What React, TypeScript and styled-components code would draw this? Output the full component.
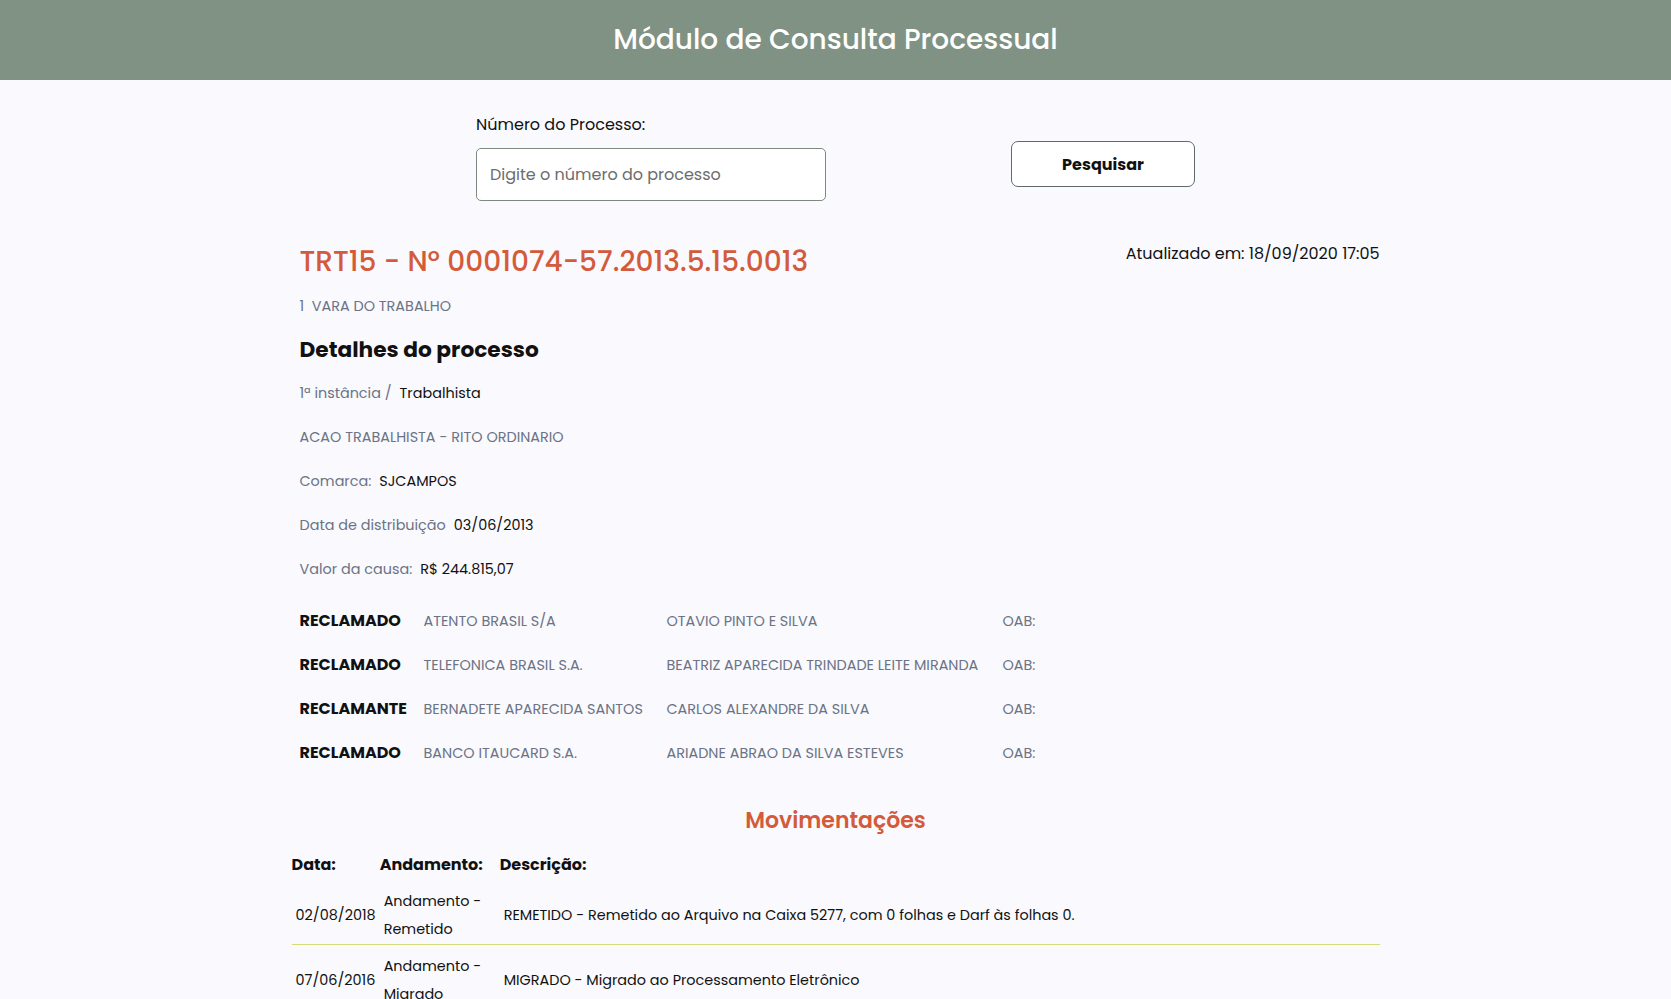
import styled, { createGlobalStyle } from 'styled-components'

const GlobalStyle = createGlobalStyle`
  body {
    margin: 0;
    background: #f9f9fe;
    font-family: "Poppins", "Open Sans", sans-serif;
    color: #111;
  }
`

const Header = styled.header`
  height: 80px;
  background: #7f9283;
  display: flex;
  align-items: center;
  justify-content: center;
`

const HeaderTitle = styled.h1`
  margin: 0;
  color: #fff;
  font-size: 28px;
  font-weight: 500;
`

const SearchForm = styled.form`
  width: 719px;
  margin: 35px auto 0;
  display: flex;
  justify-content: space-between;
  align-items: flex-start;
`

const Field = styled.div`
  display: flex;
  flex-direction: column;
`

const Label = styled.label`
  font-size: 16px;
  line-height: 20px;
  margin-bottom: 13px;
`

const Input = styled.input`
  box-sizing: border-box;
  width: 350px;
  height: 53px;
  padding: 0 13px;
  border: 1px solid #7d8a7f;
  border-radius: 5px;
  background: #fff;
  font-family: inherit;
  font-size: 16px;
  &::placeholder {
    color: #6d6d6d;
  }
`

const Button = styled.button`
  box-sizing: border-box;
  width: 184px;
  height: 46px;
  margin-top: 26px;
  border: 1px solid #5f6b6b;
  border-radius: 7px;
  background: #fff;
  font-family: inherit;
  font-size: 16px;
  font-weight: 700;
  color: #111;
  cursor: pointer;
`

const Main = styled.main`
  width: 1088px;
  margin: 41px auto 0;
`

const Details = styled.section`
  padding: 0 0 0 8px;
`

const TitleRow = styled.div`
  display: flex;
  justify-content: space-between;
  align-items: flex-start;
`

const ProcessTitle = styled.h2`
  margin: 0;
  font-size: 28px;
  line-height: 40px;
  font-weight: 500;
  color: #d35b3b;
`

const Updated = styled.span`
  font-size: 16px;
  line-height: 24px;
`

const Subtle = styled.div`
  margin-top: 14px;
  font-size: 14.4px;
  line-height: 20px;
  color: #6b7385;
`

const SectionTitle = styled.h3`
  margin: 19px 0 0;
  font-size: 21.7px;
  line-height: 30px;
  font-weight: 700;
`

const InfoList = styled.div`
  margin-top: 18px;
  display: flex;
  flex-direction: column;
  gap: 24px;
`

const InfoLine = styled.div`
  font-size: 14.4px;
  line-height: 20px;
  color: #6b7385;
`

const Value = styled.span`
  color: #111;
  margin-left: 8px;
`

const Parties = styled.div`
  margin-top: 32px;
  display: grid;
  grid-template-columns: 124px 243px 336px auto;
  row-gap: 24px;
  align-items: center;
  font-size: 14.4px;
  line-height: 20px;
  color: #6b7385;
`

const Role = styled.span`
  font-size: 16px;
  font-weight: 700;
  color: #111;
`

const MovTitle = styled.h3`
  margin: 43px 0 11px;
  text-align: center;
  font-size: 22px;
  line-height: 30px;
  font-weight: 600;
  color: #d35b3b;
`

const Table = styled.table`
  width: 100%;
  border-collapse: collapse;
`

const Th = styled.th<{ w?: number }>`
  text-align: left;
  padding: 6px 0 3px;
  font-size: 16px;
  line-height: 24px;
  font-weight: 700;
  width: ${(p) => (p.w ? `${p.w}px` : 'auto')};
`

const Row = styled.tr`
  border-bottom: 1px solid #d6db7a;
`

const Td = styled.td`
  padding: 7px 4px 1px;
  font-size: 14.4px;
  line-height: 28px;
  vertical-align: middle;
`

const parties = [
  ['RECLAMADO', 'ATENTO BRASIL S/A', 'OTAVIO PINTO E SILVA'],
  ['RECLAMADO', 'TELEFONICA BRASIL S.A.', 'BEATRIZ APARECIDA TRINDADE LEITE MIRANDA'],
  ['RECLAMANTE', 'BERNADETE APARECIDA SANTOS', 'CARLOS ALEXANDRE DA SILVA'],
  ['RECLAMADO', 'BANCO ITAUCARD S.A.', 'ARIADNE ABRAO DA SILVA ESTEVES'],
]

const moves = [
  ['02/08/2018', 'Andamento - Remetido', 'REMETIDO - Remetido ao Arquivo na Caixa 5277, com 0 folhas e Darf às folhas 0.'],
  ['07/06/2016', 'Andamento - Migrado', 'MIGRADO - Migrado ao Processamento Eletrônico'],
]

export default function App() {
  return (
    <>
      <GlobalStyle />
      <Header>
        <HeaderTitle>Módulo de Consulta Processual</HeaderTitle>
      </Header>
      <SearchForm onSubmit={(e) => e.preventDefault()}>
        <Field>
          <Label>Número do Processo:</Label>
          <Input placeholder="Digite o número do processo" />
        </Field>
        <Button type="submit">Pesquisar</Button>
      </SearchForm>
      <Main>
        <Details>
          <TitleRow>
            <ProcessTitle>TRT15 - Nº 0001074-57.2013.5.15.0013</ProcessTitle>
            <Updated>Atualizado em: 18/09/2020 17:05</Updated>
          </TitleRow>
          <Subtle>1&nbsp; VARA DO TRABALHO</Subtle>
          <SectionTitle>Detalhes do processo</SectionTitle>
          <InfoList>
            <InfoLine>1ª instância /<Value>Trabalhista</Value></InfoLine>
            <InfoLine>ACAO TRABALHISTA - RITO ORDINARIO</InfoLine>
            <InfoLine>Comarca:<Value>SJCAMPOS</Value></InfoLine>
            <InfoLine>Data de distribuição<Value>03/06/2013</Value></InfoLine>
            <InfoLine>Valor da causa:<Value>R$ 244.815,07</Value></InfoLine>
          </InfoList>
          <Parties>
            {parties.map(([role, name, lawyer], i) => (
              <>
                <Role key={`r${i}`}>{role}</Role>
                <span key={`n${i}`}>{name}</span>
                <span key={`l${i}`}>{lawyer}</span>
                <span key={`o${i}`}>OAB:</span>
              </>
            ))}
          </Parties>
        </Details>
        <MovTitle>Movimentações</MovTitle>
        <Table>
          <thead>
            <tr>
              <Th w={88}>Data:</Th>
              <Th w={120}>Andamento:</Th>
              <Th>Descrição:</Th>
            </tr>
          </thead>
          <tbody>
            {moves.map(([date, step, desc]) => (
              <Row key={date}>
                <Td>{date}</Td>
                <Td>{step}</Td>
                <Td>{desc}</Td>
              </Row>
            ))}
          </tbody>
        </Table>
      </Main>
    </>
  )
}
